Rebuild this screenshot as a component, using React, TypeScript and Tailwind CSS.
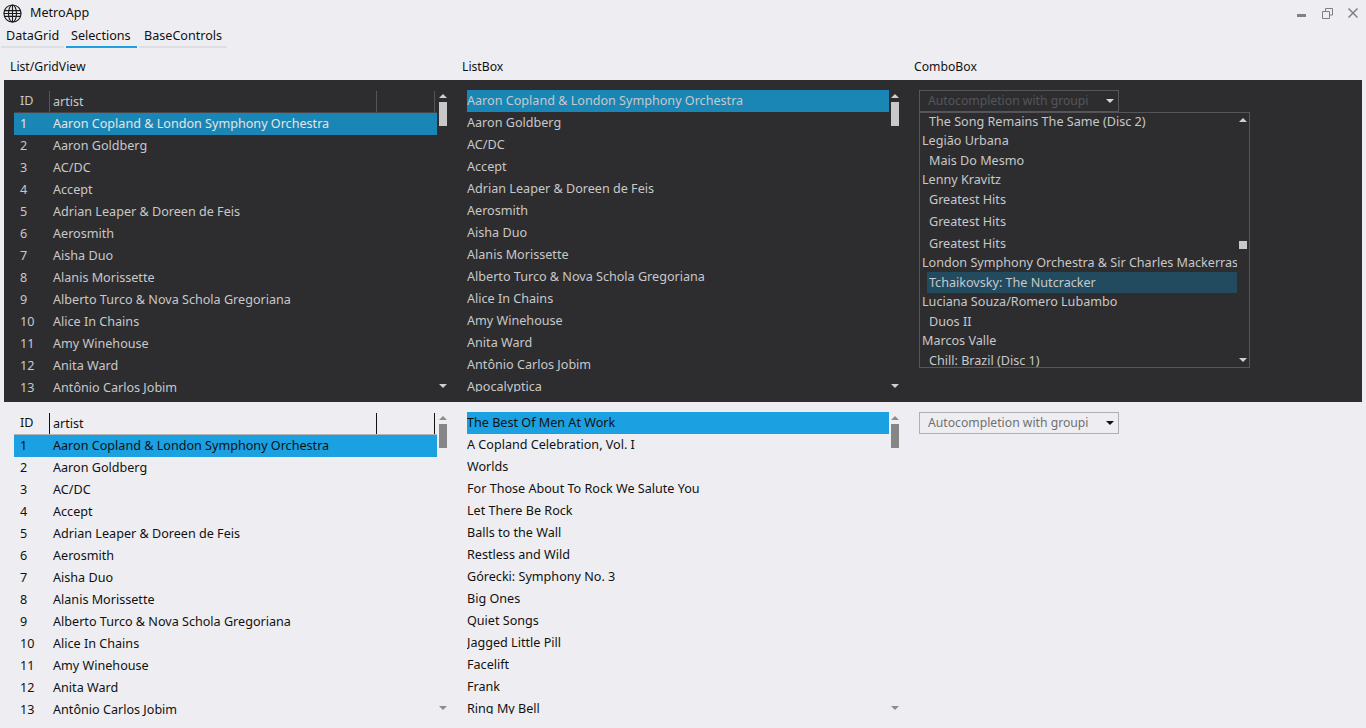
import React from 'react';

const artists = [
  'Aaron Copland & London Symphony Orchestra',
  'Aaron Goldberg',
  'AC/DC',
  'Accept',
  'Adrian Leaper & Doreen de Feis',
  'Aerosmith',
  'Aisha Duo',
  'Alanis Morissette',
  'Alberto Turco & Nova Schola Gregoriana',
  'Alice In Chains',
  'Amy Winehouse',
  'Anita Ward',
  'Antônio Carlos Jobim',
];

const albums = [
  'The Best Of Men At Work',
  'A Copland Celebration, Vol. I',
  'Worlds',
  'For Those About To Rock We Salute You',
  'Let There Be Rock',
  'Balls to the Wall',
  'Restless and Wild',
  'Górecki: Symphony No. 3',
  'Big Ones',
  'Quiet Songs',
  'Jagged Little Pill',
  'Facelift',
  'Frank',
  'Ring My Bell',
];

const comboItems = [
  { label: 'The Song Remains The Same (Disc 2)', h: 'h-[18px]', child: true },
  { label: 'Legião Urbana', h: 'h-[20px]', child: false },
  { label: 'Mais Do Mesmo', h: 'h-[19px] pt-[2px]', child: true },
  { label: 'Lenny Kravitz', h: 'h-[20px]', child: false },
  { label: 'Greatest Hits', h: 'h-[20px]', child: true },
  { label: 'Greatest Hits', h: 'h-[22px] pt-[2px]', child: true },
  { label: 'Greatest Hits', h: 'h-[21px] pt-[4px]', child: true },
  { label: 'London Symphony Orchestra & Sir Charles Mackerras', h: 'h-[19px] pt-[2px]', child: false },
  { label: 'Tchaikovsky: The Nutcracker', h: 'h-[21px] pt-[2px]', child: true, selected: true },
  { label: 'Luciana Souza/Romero Lubambo', h: 'h-[18px]', child: false },
  { label: 'Duos II', h: 'h-[20px] pt-[2px]', child: true },
  { label: 'Marcos Valle', h: 'h-[19px] pt-[2px]', child: false },
  { label: 'Chill: Brazil (Disc 1)', h: 'h-[20px] pt-[2px]', child: true },
];

const ArrowUp = ({ className }: { className: string }) => (
  <svg width="8" height="4" viewBox="0 0 8 4" className={className}>
    <path d="M4 0l4 4H0z" fill="currentColor" />
  </svg>
);

const ArrowDown = ({ className }: { className: string }) => (
  <svg width="8" height="4" viewBox="0 0 8 4" className={className}>
    <path d="M0 0h8L4 4z" fill="currentColor" />
  </svg>
);

const Scrollbar = ({ dark, bottom }: { dark: boolean; bottom: string }) => {
  const arrow = dark ? 'text-[#d0d0d0]' : 'text-[#8c8c8c]';
  return (
    <div className="flex w-[11px] shrink-0 flex-col items-center">
      <ArrowUp className={`mt-[4px] ${arrow}`} />
      <div className={`mt-[4px] h-[24px] w-[8px] ${dark ? 'bg-[#c8c8c8]' : 'bg-[#868686]'}`} />
      <div className="flex-1" />
      <ArrowDown className={`${bottom} ${arrow}`} />
    </div>
  );
};

const GridList = ({ dark }: { dark: boolean }) => {
  const sep = dark ? 'border-[#55555a]' : 'border-[#111]';
  return (
    <div className="flex h-full w-[434px]">
      <div className="flex w-[423px] flex-col overflow-hidden">
        <div className={`flex h-[23px] shrink-0 items-center border-b ${dark ? 'border-[#46464a]' : 'border-[#b5b5b5]'}`}>
          <div className="w-[35px] pl-[6px]">ID</div>
          <div className={`h-[21px] w-[327px] border-l pl-[3px] leading-[21px] ${sep}`}>artist</div>
          <div className={`h-[21px] w-[59px] border-x ${sep}`} />
        </div>
        {artists.map((name, i) => (
          <div
            key={name}
            className={`flex h-[22px] shrink-0 items-center ${i === 0 ? (dark ? 'bg-[#1a86b6] text-[#e4e4e4]' : 'bg-[#1ba1e2] text-[#111]') : ''}`}
          >
            <div className="w-[39px] pl-[6px]">{i + 1}</div>
            <div>{name}</div>
          </div>
        ))}
      </div>
      <Scrollbar dark={dark} bottom="mb-[8px]" />
    </div>
  );
};

const PlainList = ({ items, dark }: { items: string[]; dark: boolean }) => (
  <div className="flex h-full w-[433px]">
    <div className="w-[422px] overflow-hidden">
      {items.map((name, i) => (
        <div
          key={name}
          className={`flex h-[22px] items-center ${i === 0 ? (dark ? 'bg-[#1a86b6] text-[#c8c8c8]' : 'bg-[#1ba1e2] text-[#111]') : ''}`}
        >
          {name}
        </div>
      ))}
    </div>
    <Scrollbar dark={dark} bottom="mb-[4px]" />
  </div>
);

const Combo = ({ dark }: { dark: boolean }) => (
  <div
    className={`flex h-[22px] w-[200px] items-center border pl-[8px] text-[12.2px] ${dark ? 'border-[#55555a] text-[#55555a]' : 'border-[#b0b0b0] text-[#707070]'}`}
  >
    <div className="w-[161px] overflow-hidden whitespace-nowrap">Autocompletion with grouping</div>
    <ArrowDown className={`ml-[17px] ${dark ? 'text-[#d8d8d8]' : 'text-[#111]'}`} />
  </div>
);

const ComboPopup = () => (
  <div className="absolute left-0 top-[22px] flex h-[256px] w-[331px] border border-[#55555a] bg-[#2d2d30] text-[#c8c8c8]">
    <div className="w-[317px] overflow-hidden pl-[2px]">
      {comboItems.map((item, i) => (
        <div
          key={i}
          className={`flex items-center whitespace-nowrap ${item.h} ${item.child ? 'ml-[5px] pl-[2px]' : ''} ${item.selected ? 'bg-[#234b60]' : ''}`}
        >
          {item.label}
        </div>
      ))}
    </div>
    <div className="relative flex-1">
      <ArrowUp className="absolute left-[2px] top-[5px] text-[#d0d0d0]" />
      <div className="absolute left-[2px] top-[128px] h-[8px] w-[8px] bg-[#c8c8c8]" />
      <ArrowDown className="absolute bottom-[5px] left-[2px] text-[#d0d0d0]" />
    </div>
  </div>
);

const Panel = ({ dark, listItems }: { dark: boolean; listItems: string[] }) => (
  <div
    className={`grid h-[322px] grid-cols-[453px_452px_1fr] px-[10px] pt-[10px] ${dark ? 'bg-[#2d2d30] text-[#c8c8c8]' : 'text-[#111]'}`}
  >
    <div className="h-[306px]">
      <GridList dark={dark} />
    </div>
    <div className="h-[302px]">
      <PlainList items={listItems} dark={dark} />
    </div>
    <div className="relative">
      <Combo dark={dark} />
      {dark && <ComboPopup />}
    </div>
  </div>
);

export default function App() {
  return (
    <div
      className="h-[728px] w-[1366px] overflow-hidden bg-[#eeeef2] text-[12.6px] text-[#111]"
      style={{ fontFamily: '"Noto Sans", "Noto Sans CJK SC", sans-serif' }}
    >
      {/* Title bar */}
      <div className="flex h-[26px] items-center">
        <svg width="19" height="19" viewBox="0 0 20 20" fill="none" stroke="#1a1a1a" strokeWidth="1.2" className="ml-[3px]">
          <circle cx="10" cy="10" r="9" />
          <ellipse cx="10" cy="10" rx="4.2" ry="9" />
          <path d="M10 1v18M1.5 7h17M1.5 13h17M1 10h18" />
        </svg>
        <div className="ml-[8px]">MetroApp</div>
        <div className="flex-1" />
        <div className="mr-[16px] mt-[4px] h-[3px] w-[9px] bg-[#808080]" />
        <svg width="11" height="11" viewBox="0 0 11 11" fill="none" stroke="#808080" className="mr-[15px]">
          <path d="M3.5 3V.5h7v6.5H8M.5 3.5h7v7h-7z" />
        </svg>
        <svg width="10" height="10" viewBox="0 0 10 10" fill="none" stroke="#808080" strokeWidth="1.5" className="mr-[8px]">
          <path d="M.5.5l9 9M9.5.5l-9 9" />
        </svg>
      </div>

      {/* Tabs */}
      <div className="ml-[1px] flex h-[22px] gap-[2px]">
        <div className="w-[63px] border-b-2 border-[#dedee5] pl-[5px] leading-[20px]">DataGrid</div>
        <div className="w-[71px] border-b-2 border-[#1ba1e2] pl-[5px] leading-[20px]">Selections</div>
        <div className="w-[88px] border-b-2 border-[#dedee5] pl-[5px] leading-[20px]">BaseControls</div>
      </div>

      {/* Column labels */}
      <div className="grid h-[32px] grid-cols-[452px_452px_1fr] items-center pl-[10px] pt-[7px] text-[12.2px]">
        <div>List/GridView</div>
        <div>ListBox</div>
        <div>ComboBox</div>
      </div>

      <div className="mx-[4px]">
        <Panel dark listItems={[...artists, 'Apocalyptica']} />
        <Panel dark={false} listItems={albums} />
      </div>
    </div>
  );
}
